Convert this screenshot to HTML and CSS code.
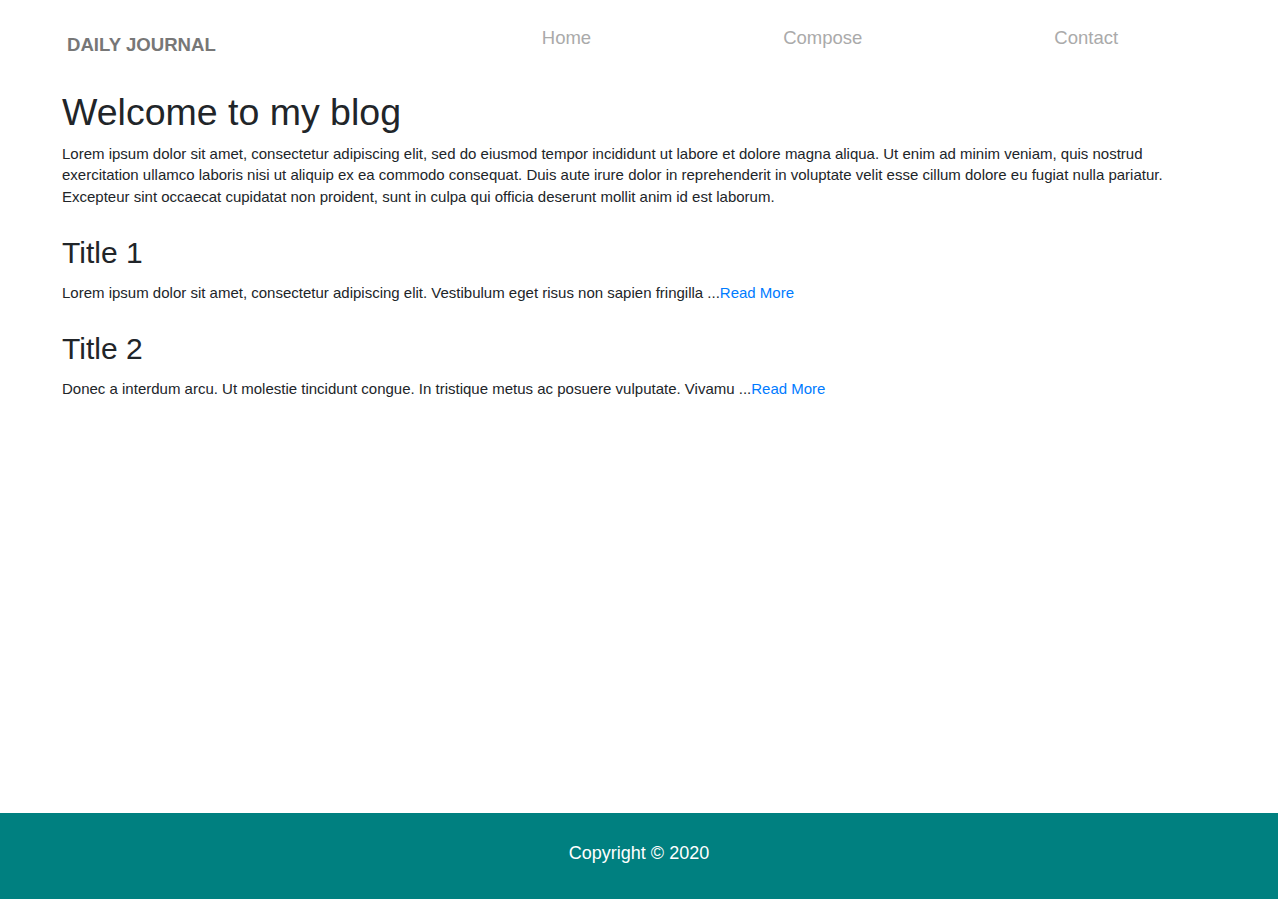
FILE: index.html
```html
<!DOCTYPE html>
<html lang="en">
<head>
<meta charset="utf-8">
<title>Daily Journal</title>
<link rel="stylesheet" href="styles.css">
</head>
<body>
<div class="page">
  <header class="navbar">
    <a class="brand" href="#">DAILY JOURNAL</a>
    <ul class="nav-links">
      <li><a href="#">Home</a></li>
      <li><a href="#">Compose</a></li>
      <li><a href="#">Contact</a></li>
    </ul>
  </header>
  <main class="content">
    <h1>Welcome to my blog</h1>
    <p class="intro">Lorem ipsum dolor sit amet, consectetur adipiscing elit, sed do eiusmod tempor incididunt ut labore et dolore magna aliqua. Ut enim ad minim veniam, quis nostrud exercitation ullamco laboris nisi ut aliquip ex ea commodo consequat. Duis aute irure dolor in reprehenderit in voluptate velit esse cillum dolore eu fugiat nulla pariatur. Excepteur sint occaecat cupidatat non proident, sunt in culpa qui officia deserunt mollit anim id est laborum.</p>
    <div class="post">
      <h2>Title 1</h2>
      <p>Lorem ipsum dolor sit amet, consectetur adipiscing elit. Vestibulum eget risus non sapien fringilla ...<a href="#">Read More</a></p>
    </div>
    <div class="post">
      <h2>Title 2</h2>
      <p>Donec a interdum arcu. Ut molestie tincidunt congue. In tristique metus ac posuere vulputate. Vivamu ...<a href="#">Read More</a></p>
    </div>
  </main>
  <footer class="footer">
    <p>Copyright © 2020</p>
  </footer>
</div>
</body>
</html>
```

FILE: styles.css
```css
* { box-sizing: border-box; }
html, body { margin: 0; padding: 0; }
body {
  font-family: "Liberation Sans", Arial, sans-serif;
  color: #212529;
  background: #fff;
}
.page {
  min-height: 100vh;
  display: flex;
  flex-direction: column;
}
.navbar {
  height: 89.5px;
  display: flex;
  align-items: flex-start;
  padding-left: 67px;
}
.brand {
  font-size: 18.6px;
  font-weight: bold;
  color: #777777;
  text-decoration: none;
  margin-top: 34px;
  line-height: 21px;
}
.nav-links {
  list-style: none;
  margin: 26.5px 0 0 326px;
  padding: 0;
  display: flex;
  gap: 192px;
}
.nav-links a {
  font-size: 18.5px;
  line-height: 21px;
  color: #aaaaaa;
  text-decoration: none;
}
.content {
  padding: 0 62px;
}
h1 {
  font-size: 37.5px;
  font-weight: 400;
  line-height: 1.2;
  margin: 0 0 8px;
}
p {
  font-size: 15px;
  line-height: 21.5px;
  margin: 0;
}
.post { margin-top: 27.3px; }
.intro + .post { margin-top: 28.3px; }
h2 {
  font-size: 30px;
  font-weight: 400;
  line-height: 1.2;
  margin: 0 0 10.8px;
}
.post a { color: #007bff; text-decoration: none; }
.footer {
  margin-top: auto;
  height: 86px;
  background: #008080;
  display: flex;
  align-items: center;
  justify-content: center;
  padding-bottom: 5px;
}
.footer p {
  margin: 0;
  color: #fff;
  font-size: 18px;
  line-height: 21px;
}
```
